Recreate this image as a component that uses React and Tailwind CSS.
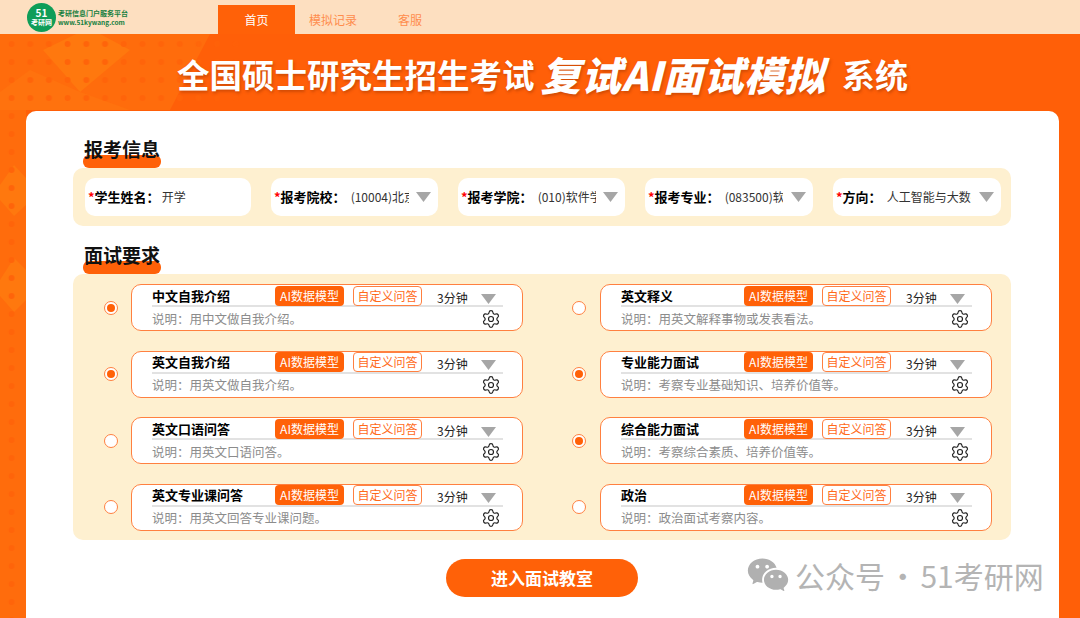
import { Settings } from 'lucide-react';
import { RiWechatFill } from 'react-icons/ri';

const font = { fontFamily: '"Noto Sans CJK SC", "Noto Sans", sans-serif' };

const fields = [
  { label: '学生姓名', value: '开学', w: 'w-[166px]', valueW: 'w-[60px]', plain: true },
  { label: '报考院校', value: '(10004)北京交通大学', w: 'w-[167px]', valueW: 'w-[58px]' },
  { label: '报考学院', value: '(010)软件学院', w: 'w-[167px]', valueW: 'w-[58px]' },
  { label: '报考专业', value: '(083500)软件工程', w: 'w-[168px]', valueW: 'w-[58px]' },
  { label: '方向', value: '人工智能与大数据', w: 'w-[168px]', valueW: 'w-[84px]' },
];

const leftItems = [
  { title: '中文自我介绍', desc: '说明：用中文做自我介绍。', on: true },
  { title: '英文自我介绍', desc: '说明：用英文做自我介绍。', on: true },
  { title: '英文口语问答', desc: '说明：用英文口语问答。', on: false },
  { title: '英文专业课问答', desc: '说明：用英文回答专业课问题。', on: false },
];

const rightItems = [
  { title: '英文释义', desc: '说明：用英文解释事物或发表看法。', on: false },
  { title: '专业能力面试', desc: '说明：考察专业基础知识、培养价值等。', on: true },
  { title: '综合能力面试', desc: '说明：考察综合素质、培养价值等。', on: true },
  { title: '政治', desc: '说明：政治面试考察内容。', on: false },
];

const Caret = ({ className }) => (
  <svg viewBox="0 0 15 10" className={className}>
    <polygon points="0,0 15,0 7.5,10" fill="#a6a6a6" />
  </svg>
);

const Logo = () => (
  <div className="flex items-center gap-[2px]">
    <div className="w-[29px] h-[29px] rounded-full bg-[#0f9d58] flex flex-col items-center justify-center text-white font-bold leading-none">
      <span className="text-[10px] leading-[11px]">51</span>
      <span className="text-[7px] leading-[9px]">考研网</span>
    </div>
    <div className="flex flex-col text-[#16803f] leading-none">
      <span className="text-[7px] leading-[9px] font-bold whitespace-nowrap">考研信息门户服务平台</span>
      <span className="text-[6.5px] leading-[8px] font-bold whitespace-nowrap">www.51kywang.com</span>
    </div>
  </div>
);

const Background = () => (
  <svg className="absolute inset-0 w-full h-full" viewBox="0 0 1080 618">
    <defs>
      <pattern id="dots" x="2" y="-2" width="18.7" height="18" patternUnits="userSpaceOnUse">
        <circle cx="9.5" cy="10" r="3" fill="#ff640a" />
      </pattern>
      <linearGradient id="fade" x1="0" x2="1" y1="0" y2="0">
        <stop offset="0" stopColor="#fff" />
        <stop offset="0.7" stopColor="#fff" />
        <stop offset="1" stopColor="#000" />
      </linearGradient>
      <mask id="fadeMask">
        <rect width="250" height="618" fill="url(#fade)" />
      </mask>
    </defs>
    <rect width="1080" height="618" fill="#ff5f08" />
    <rect width="26" height="618" fill="#ff6c0c" />
    <polygon points="0,34 210,34 170,110 0,110" fill="#ff6c0c" />
    <polygon points="43,50 76,34 100,34 130,50 80,92" fill="#ff780e" />
    <polygon points="0,92 30,70 80,92 130,110 0,110" fill="#ff720e" />
    <polygon points="0,185 14,165 26,178 26,205 14,216 0,200" fill="#ff780e" />
    <polygon points="0,280 14,258 26,270 26,300 14,312 0,296" fill="#ff780e" />
    <rect width="250" height="618" fill="url(#dots)" mask="url(#fadeMask)" />
  </svg>
);

const Heading = ({ children }) => (
  <div className="relative ml-[11px] w-[78px] h-[22px]">
    <div className="absolute left-[-1px] top-[17px] w-[78px] h-[13px] rounded-[6px] bg-[#ff6108]" />
    <h2 className="relative text-[19px] leading-[22px] font-bold text-[#111] whitespace-nowrap">{children}</h2>
  </div>
);

const Field = ({ label, value, w, valueW, plain }) => (
  <div className={`${w} h-[38px] bg-white rounded-[10px] flex items-center pl-[3px] pr-[7px]`}>
    <span className="text-[13px] font-bold text-black whitespace-nowrap">
      <span className="text-[#ff0000]">*</span>
      {label}：
    </span>
    <span className={`${valueW} ${plain ? 'ml-[2px]' : 'ml-[5px]'} text-[12px] text-[#333] whitespace-nowrap overflow-hidden`}>{value}</span>
    {!plain && <Caret className="w-[15px] h-[10px] ml-auto" />}
  </div>
);

const Radio = ({ on }) => (
  <div className="w-[14px] h-[14px] rounded-full border-[1.5px] border-[#ff8040] bg-white flex items-center justify-center shrink-0">
    {on && <div className="w-[8px] h-[8px] rounded-full bg-[#ff6108]" />}
  </div>
);

const Item = ({ title, desc, on, right }) => (
  <div className={`flex items-center ${right ? 'gap-[14px]' : 'gap-[13px]'}`}>
    <Radio on={on} />
    <div className="w-[392px] h-[47px] bg-white border-[1.5px] border-[#ff8040] rounded-[10px] pl-[20px] pr-[19px]">
      <div className="h-[22px] flex items-center border-b-2 border-[#e2e2e2]">
        <span className="w-[123px] mt-[1px] text-[13px] leading-[20px] font-bold text-black whitespace-nowrap">{title}</span>
        <span className="w-[69px] h-[20px] mt-[1px] rounded-[4px] bg-[#ff6108] text-white text-[12px] leading-[20px] text-center whitespace-nowrap">AI数据模型</span>
        <span className="ml-[9px] w-[69px] h-[20px] mt-[1px] rounded-[4px] bg-white border-[1.5px] border-[#ff8040] text-[#ff6a1a] text-[12px] leading-[17px] text-center whitespace-nowrap">自定义问答</span>
        <span className="ml-[15px] mt-[5px] text-[12px] text-[#222] whitespace-nowrap">3分钟</span>
        <Caret className="w-[15px] h-[10px] ml-auto mt-[7px] mr-[7px]" />
      </div>
      <div className="flex items-center justify-between h-[23px]">
        <span className="text-[12.5px] leading-[20px] text-[#8c8c8c] whitespace-nowrap">{desc}</span>
        <Settings className="w-[20px] h-[20px] mr-[2px] text-[#222]" strokeWidth={1.4} />
      </div>
    </div>
  </div>
);

export default function App() {
  return (
    <div className="relative w-[1080px] h-[618px] overflow-hidden" style={font}>
      <Background />
      <div className="relative flex flex-col h-full">
        <header className="h-[34px] bg-[#fddfc0] flex items-end pl-[27px] shrink-0">
          <div className="w-[191px] h-[34px] flex items-center">
            <Logo />
          </div>
          <nav className="flex items-end text-[12px]">
            <a className="w-[77px] h-[29px] bg-[#ff6108] text-white flex items-center justify-center">首页</a>
            <a className="ml-[14px] h-[29px] flex items-center text-[#ff8d4d]">模拟记录</a>
            <a className="ml-[41px] h-[29px] flex items-center text-[#ff8d4d]">客服</a>
          </nav>
        </header>

        <div className="h-[77px] shrink-0 pl-[177px] pt-[3px] flex items-center text-white whitespace-nowrap [text-shadow:1px_2px_3px_rgba(150,50,0,0.45)]">
          <span className="text-[32.5px] font-bold leading-none">全国硕士研究生招生考试</span>
          <span className="ml-[6px] text-[40px] font-black italic leading-none tracking-[0.5px]">复试AI面试模拟</span>
          <span className="ml-[17px] text-[33px] font-bold leading-none">系统</span>
        </div>

        <main className="w-[1033px] ml-[26px] flex-1 bg-white rounded-t-[10px] pl-[47px] pr-[48px] pt-[27px]">
          <Heading>报考信息</Heading>
          <div className="h-[58px] mt-[8px] w-[938px] rounded-[10px] bg-[#fef0d0] flex items-center gap-[20px] pl-[12px]">
            {fields.map((f) => (
              <Field key={f.label} {...f} />
            ))}
          </div>

          <div className="mt-[18px]">
            <Heading>面试要求</Heading>
          </div>
          <div className="mt-[8px] w-[938px] h-[266px] rounded-[10px] bg-[#fef0d0] pl-[31px] pt-[10px] flex gap-[49px]">
            <div className="flex flex-col gap-[19.5px]">
              {leftItems.map((it) => (
                <Item key={it.title} {...it} />
              ))}
            </div>
            <div className="flex flex-col gap-[19.5px]">
              {rightItems.map((it) => (
                <Item key={it.title} {...it} right />
              ))}
            </div>
          </div>

          <div className="mt-[19px] ml-[373px] w-[192px] h-[38px] rounded-full bg-[#ff6108] text-white text-[17px] font-bold flex items-center justify-center">
            进入面试教室
          </div>
        </main>
      </div>

      <div className="absolute left-[746px] top-[553px] flex items-center text-[#b4b4b4]">
        <RiWechatFill className="w-[44px] h-[44px] text-[#b0b0b0]" />
        <span className="ml-[5px] text-[30px] leading-[44px] whitespace-nowrap [word-spacing:-4px]">公众号 · 51考研网</span>
      </div>
    </div>
  );
}
